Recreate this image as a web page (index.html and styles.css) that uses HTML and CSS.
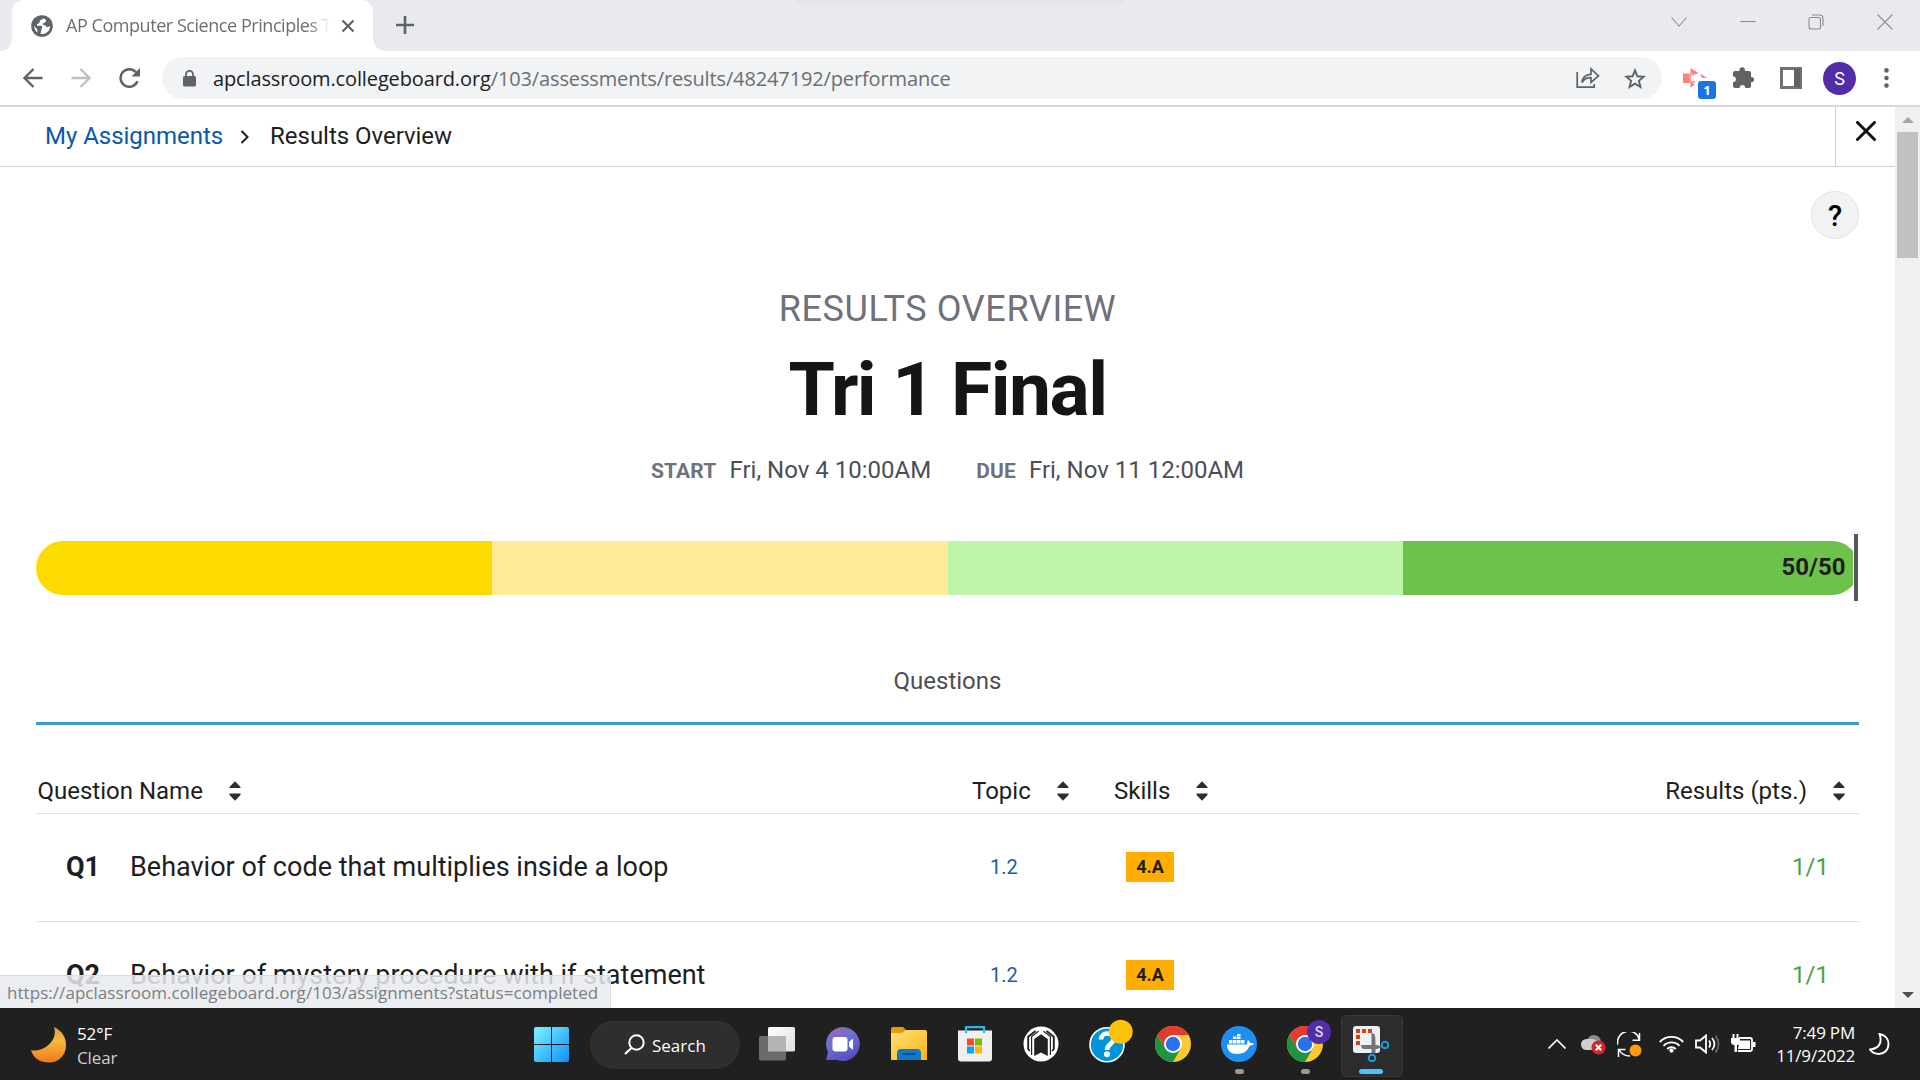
FILE: index.html
```html
<!DOCTYPE html>
<html lang="en">
<head>
<meta charset="utf-8">
<title>AP Computer Science Principles</title>
<link rel="stylesheet" href="styles.css">
</head>
<body>
<svg class="defs" width="0" height="0">
  <defs>
    <symbol id="sort" viewBox="0 0 12 20"><path d="M6 .3 11.500 6v1H.5V6zM6 19.700.5 14v-1.500h11V14z" fill="#2d2e30"/></symbol>
    <symbol id="chrome" viewBox="0 0 36 36">
      <circle cx="18" cy="18" r="18" fill="#fcc934"/>
      <path d="M2.400 9 10.200 22.500 18 18V9h15.600A18 18 0 0 0 2.400 9z" fill="#e33b2e"/>
      <path d="M2.400 9 10.200 22.500 18 27l7.800-4.500L18 36A18 18 0 0 1 2.400 9z" fill="#229342"/>
      <circle cx="18" cy="18" r="9" fill="#fff"/><circle cx="18" cy="18" r="7.200" fill="#2a72ec"/>
    </symbol>
  </defs>
</svg>
<div class="tabs">
  <div class="tab-prev"></div>
  <div class="tab">
    <svg class="globe" width="22" height="22" viewBox="0 0 22 22"><circle cx="11" cy="11" r="10.800" fill="#5f6368"/><path d="M12.500 3.200c-.6 1.300-2.600 1.100-3.600 2.400-.6.900.1 1.600-.6 2.400-.8.900-2.500.3-2.500 1.700 0 1.600 2.700 1 4.200 1.100 1.700.1 1.300 1.800.9 2.600-.7 1.300-.6 3.300-1.600 5.600 5.500.8 9.700-3 9.700-7.800-1.200-.2-1.600 1-2.900.7-1.300-.3-1.200-1.600-2.600-1.700-1.200 0-1.600-.6-1.500-1.500.2-1.400 2-.9 2.900-2 .8-1-.6-2.900-2.400-3.500zM3 10.500c.1 3 1 5.300 3.500 7.100-.1-2 .1-3.100-1.200-4.300C4.300 12.400 3.400 11.500 3 10.500z" fill="#fff"/></svg>
    <span class="tab-title seg">AP Computer Science Principles T</span>
    <svg width="14" height="14" viewBox="0 0 14 14"><path d="M1.500 1.500l11 11m0-11l-11 11" stroke="#5f6368" stroke-width="2.200"/></svg>
  </div>
  <svg class="plus" width="18" height="18" viewBox="0 0 18 18"><path d="M9 0v18M0 9h18" stroke="#5f6368" stroke-width="2.600"/></svg>
  <div class="top-shade"></div>
  <div class="win">
    <svg width="16" height="16" viewBox="0 0 16 16"><path d="M.5 3.500 8 12l7.500-8.500"/></svg>
    <svg width="16" height="16" viewBox="0 0 16 16"><path d="M.5 7.500h15"/></svg>
    <svg width="16" height="16" viewBox="0 0 16 16"><rect x="1" y="3.500" width="11.500" height="11.500" rx="2"/><path d="M4 1h8q3 0 3 3v8"/></svg>
    <svg width="16" height="16" viewBox="0 0 16 16"><path d="M.5.5l15 15m0-15l-15 15"/></svg>
  </div>
</div>
<div class="toolbar">
  <div class="nav">
    <svg width="20" height="20" viewBox="0 0 20 20"><path d="M19.500 10H2M10.500 1 1.500 10l9 9" fill="none" stroke="#5f6368" stroke-width="2.400"/></svg>
    <svg width="20" height="20" viewBox="0 0 20 20"><path d="M.5 10H18M9.500 1l9 9-9 9" fill="none" stroke="#bdbfc2" stroke-width="2.400"/></svg>
    <svg width="22" height="20" viewBox="0 0 22 20"><path d="M18.500 13.300A8.800 8.800 0 1 1 17 4.200" fill="none" stroke="#5f6368" stroke-width="2.500"/><path d="M21 0v8.500h-8.500z" fill="#5f6368"/></svg>
  </div>
  <div class="omni">
    <svg class="lock" width="13" height="17" viewBox="0 0 13 17"><rect y="6" width="13" height="10.500" rx="1.500" fill="#5f6368"/><path d="M3 7V4.300a3.500 3.500 0 0 1 7 0V7" fill="none" stroke="#5f6368" stroke-width="1.800"/></svg>
    <span class="url seg">apclassroom.collegeboard.org<span class="dim">/103/assessments/results/48247192/performance</span></span>
    <svg class="share" width="24" height="22" viewBox="0 0 24 22"><path d="M1.200 5v15.200h17V17M6 15.500c.5-5.500 3.500-8 9-8.200V2l7.500 7-7.500 6.500v-4.800c-4-.1-6.800 1-9 4.800z" fill="none" stroke="#5f6368" stroke-width="1.700"/></svg>
    <svg width="22" height="21" viewBox="0 0 22 21"><path d="M11 2.300l2.400 6 6.400.4-4.900 4.100 1.600 6.200L11 15.600l-5.500 3.400 1.600-6.200-4.900-4.100 6.400-.4z" fill="none" stroke="#5f6368" stroke-width="1.900"/></svg>
  </div>
  <div class="ext">
    <div class="ext-badged"><svg width="24" height="20" viewBox="0 0 24 20"><path d="M0 5.500h6V15H0zM7.500 0l8 5-3 1.500-5-.8zM7.500 14.500 12 16l-4.500 4zM17 5.500l7 4.500h-5z" fill="#ff8080"/><path d="M6 5.500h5v2H8v5.500h4v2H6z" fill="#ff9a9a"/></svg><b class="seg">1</b></div>
    <svg width="21" height="22" viewBox="0 0 21 22"><path d="M0 6q0-2 2-2h4.500V3a2.700 2.700 0 0 1 5.400 0v1H16q2 0 2 2v4h.5a2.600 2.600 0 0 1 0 5.200H18V19q0 2-2 2h-3.800c.1-2-1.100-3-2.700-3s-2.900 1-2.800 3H2q-2 0-2-2v-4c2 .1 3-1.100 3-2.700S2 9.500 0 9.600z" fill="#5f6368"/></svg>
    <svg width="22" height="22" viewBox="0 0 22 22"><path d="M0 0h22v22H0zM3 3v16h11V3z" fill="#6f7378" fill-rule="evenodd"/><path d="M14 2h6v18h-6z" fill="#5f6368"/></svg>
    <div class="avatar">S</div>
    <svg width="5" height="20" viewBox="0 0 5 20"><g fill="#5f6368"><circle cx="2.500" cy="2.400" r="2.300"/><circle cx="2.500" cy="10" r="2.300"/><circle cx="2.500" cy="17.600" r="2.300"/></g></svg>
  </div>
</div>
<div class="view">
  <main class="page">
    <header class="crumbs">
      <a>My Assignments</a>
      <svg width="9" height="14" viewBox="0 0 9 14"><path d="M1.500 1l6 6-6 6" fill="none" stroke="#1e1e1e" stroke-width="2"/></svg>
      <span>Results Overview</span>
      <div class="close"><svg width="20" height="20" viewBox="0 0 20 20"><path d="M1.500 1.500l17 17m0-17l-17 17" stroke="#111" stroke-width="3" stroke-linecap="round"/></svg></div>
    </header>
    <div class="help-row"><div class="help">?</div></div>
    <div class="content">
      <div class="kicker">RESULTS OVERVIEW</div>
      <h1>Tri 1 Final</h1>
      <div class="dates"><b>START</b><span>Fri, Nov 4 10:00AM</span><b class="due">DUE</b><span>Fri, Nov 11 12:00AM</span></div>
      <div class="score"><div class="bar"><i class="c1"></i><i class="c2"></i><i class="c3"></i><i class="c4"><b>50/50</b></i></div><div class="mark"></div></div>
      <div class="qtab">Questions</div>
      <div class="row head">
        <div class="name"><span>Question Name</span><svg width="12" height="20"><use href="#sort"/></svg></div>
        <div><span>Topic</span><svg width="12" height="20"><use href="#sort"/></svg></div>
        <div><span>Skills</span><svg width="12" height="20"><use href="#sort"/></svg></div>
        <div class="res"><span>Results (pts.)</span><svg width="12" height="20"><use href="#sort"/></svg></div>
      </div>
      <div class="row">
        <div class="name"><b>Q1</b><span>Behavior of code that multiplies inside a loop</span></div>
        <div class="topic">1.2</div><div class="skill"><b>4.A</b></div><div class="res">1/1</div>
      </div>
      <div class="row">
        <div class="name"><b>Q2</b><span>Behavior of mystery procedure with if statement</span></div>
        <div class="topic">1.2</div><div class="skill"><b>4.A</b></div><div class="res">1/1</div>
      </div>
    </div>
  </main>
  <div class="scroll">
    <svg width="12" height="6" viewBox="0 0 12 6"><path d="M0 6l6-6 6 6z" fill="#a3a3a3"/></svg>
    <div class="thumb"></div>
    <svg class="down" width="12" height="6" viewBox="0 0 12 6"><path d="M0 0h12L6 6z" fill="#505050"/></svg>
  </div>
  <div class="status seg">https://apclassroom.collegeboard.org/103/assignments?status=completed</div>
</div>
<footer class="taskbar seg">
  <div class="weather">
    <svg width="36" height="36" viewBox="0 0 36 36"><defs><linearGradient id="mg" x1="0" y1="0" x2="0" y2="1"><stop offset="0" stop-color="#e0a050"/><stop offset=".4" stop-color="#f6b93b"/><stop offset="1" stop-color="#ee7a1c"/></linearGradient></defs><path d="M23 0C31 4 35 10 35 18.500 35 28 28 35.500 18 35.500 9 35.500 2 31 0 23c3 1 7 .7 12-1.500C21 17 26 9 23 0z" fill="url(#mg)"/></svg>
    <div>52°F<br><em>Clear</em></div>
  </div>
  <div class="apps">
    <div class="app start"><svg width="36" height="36" viewBox="0 0 36 36"><defs><linearGradient id="wg" gradientUnits="userSpaceOnUse" x1="0" y1="0" x2="36" y2="36"><stop offset="0" stop-color="#7df4ff"/><stop offset="1" stop-color="#0b8dfb"/></linearGradient></defs><path d="M2 0h15v17H0V2q0-2 2-2zM18 0h15q2 0 2 2v15H18zM0 18h17v17H2q-2 0-2-2zM18 18h17v15q0 2-2 2H18z" fill="url(#wg)"/></svg></div>
    <div class="search"><svg width="21" height="21" viewBox="0 0 21 21"><circle cx="12.500" cy="8.500" r="7.200" fill="none" stroke="#fff" stroke-width="2"/><path d="M7.500 14 1 20" stroke="#fff" stroke-width="2.200"/></svg><span>Search</span></div>
    <div class="app"><svg width="36" height="36" viewBox="0 0 36 36"><defs><linearGradient id="tg" x1="0" y1="0" x2="1" y2="1"><stop offset="0" stop-color="#fff"/><stop offset="1" stop-color="#dedede"/></linearGradient></defs><rect x="9" y="1" width="27" height="24.500" rx="1.500" fill="url(#tg)"/><rect y="10" width="27" height="24.500" rx="1.500" fill="#6a6a6a"/><path d="M9 10h16.500q1.500 0 1.500 1.500v14H9z" fill="#b4b4b4"/></svg></div>
    <div class="app"><svg width="36" height="36" viewBox="0 0 36 36"><defs><linearGradient id="cg" x1="0" y1="0" x2=".5" y2="1"><stop offset="0" stop-color="#a266a8"/><stop offset=".5" stop-color="#6d6fd6"/><stop offset="1" stop-color="#5550c4"/></linearGradient></defs><path d="M18 1a17 17 0 1 1-6 33H1l2-8A17 17 0 0 1 18 1z" fill="url(#cg)"/><rect x="7.500" y="11" width="15" height="14.500" rx="3" fill="#fff"/><path d="M24 16l4-3.500v11.500l-4-3.500z" fill="#fff"/></svg></div>
    <div class="app"><svg width="36" height="36" viewBox="0 0 36 36"><defs><linearGradient id="fg" x1="0" y1="0" x2="1" y2="1"><stop offset="0" stop-color="#ffe07c"/><stop offset="1" stop-color="#fbb50f"/></linearGradient></defs><path d="M0 8V3q0-2 2-2h10l4 4v5H0z" fill="#e29c07"/><path d="M0 7h11l4-3h19q2 0 2 2v28H0z" fill="url(#fg)"/><path d="M6 34v-7q0-4 4-4h16q4 0 4 4v7z" fill="#1079cc"/><path d="M11 28h14" stroke="#0a4f97" stroke-width="2"/></svg></div>
    <div class="app"><svg width="36" height="36" viewBox="0 0 36 36"><path d="M9 6V1.200h18V6" fill="none" stroke="#28b4f0" stroke-width="2.200"/><path d="M1 4.500h34v28q0 3-3 3H4q-3 0-3-3z" fill="#f0f0f0"/><path d="M10 12.500h7v7h-7z" fill="#f04e23"/><path d="M18 12.500h7v7h-7z" fill="#7fb900"/><path d="M10 20.500h7v7h-7z" fill="#03a4ee"/><path d="M18 20.500h7v7h-7z" fill="#fdb902"/><path d="M9 4.500v2.500M27 4.500v2.500" stroke="#28b4f0" stroke-width="2.200"/></svg></div>
    <div class="app"><svg width="36" height="36" viewBox="0 0 36 36"><circle cx="18" cy="18" r="17.500" fill="#fff"/><path d="M11.200 13 18 8.300l6.800 4.700v17L18 26.500 11.200 30z" fill="#222"/><path d="M15.500 5.300 8.600 10.500V29M20.500 5.300l6.900 5.200V29" fill="none" stroke="#222" stroke-width="1.200"/><path d="M12.500 5 5.200 10.800V23l1.600 2M23.500 5l7.300 5.800V23l-1.600 2" fill="none" stroke="#222" stroke-width="1.900"/></svg></div>
    <div class="app"><svg class="spill" width="44" height="44" viewBox="0 0 44 44"><circle cx="22" cy="22.700" r="17" fill="#0096d8" stroke="#fff" stroke-width="1.600"/><path d="M16 17.500c0-8 12.500-8 12.500-.5 0 5-6.500 5-6.500 11" fill="none" stroke="#fff" stroke-width="4.600"/><circle cx="22" cy="32.200" r="3" fill="#fff"/><circle cx="35.700" cy="9.700" r="12" fill="#ffc20a"/></svg></div>
    <div class="app"><svg width="36" height="36"><use href="#chrome"/></svg></div>
    <div class="app run"><svg width="36" height="36" viewBox="0 0 36 36"><circle cx="18" cy="18" r="18" fill="#1d8ff0"/><path d="M6 18.500h20c.5-2 .2-3 1-4.500 1.300 1 1.800 2 2 3 1.500-.2 3 0 4 .6-.8 1.700-2.500 2.200-4.500 2.200C26 26 22 28 16 28 10 28 6 25 6 18.500zM8 14h3.500v3.500H8zM12 14h3.500v3.500H12zM16 14h3.500v3.500H16zM20 14h3.500v3.500H20zM12 10.500h3.500V13H12zM16 10.500h3.500V13H16zM16 8h3.500v2H16z" fill="#fff"/></svg></div>
    <div class="app run"><svg width="36" height="36"><use href="#chrome"/></svg><b class="pbadge">S</b></div>
    <div class="app active"><svg width="36" height="36" viewBox="0 0 36 36"><rect width="27" height="27" rx="3" fill="#eef0f3"/><path d="M3 3h4v4H3zM9 3h4v4H9zM15 3h4v4h-4zM3 9h4v4H3zM3 15h4v4H3z" fill="#d8400f"/><path d="M18.500 7c4 0 4 3 4 13v7h-4zM8 19h16l5 2-5 2H11c-2 0-3-2-3-4z" fill="#70757a"/><circle cx="32" cy="19" r="3.300" fill="none" stroke="#1c9be6" stroke-width="2"/><circle cx="19" cy="32" r="3.300" fill="none" stroke="#1c9be6" stroke-width="2"/></svg></div>
  </div>
  <div class="tray">
    <svg width="18" height="10" viewBox="0 0 18 10"><path d="M.5 9.500 9 1l8.500 8.500" fill="none" stroke="#fff" stroke-width="1.600"/></svg>
    <svg width="25" height="21" viewBox="0 0 25 21"><circle cx="13" cy="8" r="7" fill="#8c8c8c"/><rect x="0" y="5" width="17" height="11" rx="5.500" fill="#cfcfcf"/><circle cx="17.500" cy="13.500" r="7" fill="#d8232a"/><path d="M14.800 10.800l5.400 5.400m0-5.400l-5.400 5.400" stroke="#fff" stroke-width="2"/></svg>
    <svg class="sync" width="25" height="25" viewBox="0 0 25 25"><path d="M.8 12.500A11 11 0 0 1 22.500 8M15.500 8.300h7V1M13 24C8 24 4 21.500 1.800 17.500M8.500 17.500h-7V25" fill="none" stroke="#fff" stroke-width="1.500"/><circle cx="18.500" cy="18.500" r="6" fill="#ff9b0a"/></svg>
    <svg width="25" height="18" viewBox="0 0 25 18"><g fill="none" stroke="#fff" stroke-width="1.900"><path d="M.8 7a16 16 0 0 1 23.400 0M4.500 10.800a11 11 0 0 1 16 0M8.200 14a6.300 6.300 0 0 1 8.600 0"/></g><circle cx="12.500" cy="15.600" r="2.100" fill="#fff"/></svg>
    <svg width="25" height="20" viewBox="0 0 25 20"><g fill="none" stroke="#fff" stroke-width="1.800"><path d="M1 6.500h4L11 1.500v17L5 13.500H1zM14 6.500q2.500 3.500 0 7M17 4q5 6 0 12"/><path d="M20.500 1.500q6 8.500 0 17" stroke="#666"/></g></svg>
    <svg width="25" height="20" viewBox="0 0 25 20"><path d="M8 4h11q2 0 2 2v9q0 2-2 2H7" fill="none" stroke="#fff" stroke-width="1.800"/><path d="M8.500 6.500h10.500v8.500H7zM22 8h2.500v5H22zM0 4h9v4q0 3-3 3v7H3.500v-7Q0 11 0 8zM1.500 0h2v4h-2zM5.500 0h2v4h-2z" fill="#fff"/></svg>
    <div class="clock">7:49 PM<br><span>11/9/2022</span></div>
    <svg class="dnd" width="21" height="22" viewBox="0 0 21 22"><path d="M10.500 1C16 2 19.500 6 19.500 11 19.500 17 15 21 10 21c-4 0-7-1.500-9-4.500C9 15.500 14 11 10.500 1z" fill="none" stroke="#fff" stroke-width="1.900"/></svg>
  </div>
</footer>
</body>
</html>
```
FILE: styles.css
```css
* { box-sizing: border-box; }
body { margin: 0; width: 1920px; height: 1080px; overflow: hidden; background: #fff; font-family: Roboto, "Liberation Sans", sans-serif; color: #1e1e1e; display: flex; flex-direction: column; white-space: nowrap; }
svg { display: block; flex: none; }
.defs { position: absolute; }
.spill { overflow: visible; }
.seg { font-family: "Open Sans", "Noto Sans", sans-serif; }

/* tab strip */
.tabs { height: 51px; flex: none; background: #e8eaed; display: flex; position: relative; }
.tab-prev { width: 12px; background: #fff; }
.tab-prev::before { content: ""; display: block; height: 51px; background: #e8eaed; border-bottom-right-radius: 12px; }
.tab { width: 361px; background: #fff; border-radius: 12px 12px 0 0; display: flex; align-items: center; padding-left: 19px; position: relative; }
.tab::after { content: ""; position: absolute; left: 361px; bottom: 0; width: 12px; height: 12px; background: radial-gradient(circle at 100% 0, #e8eaed 11.500px, #fff 12px); }
.tab-title { width: 264px; margin: 0 11px 0 13px; font-size: 18px; line-height: 48px; height: 50px; letter-spacing: -.45px; color: #6b6f73; overflow: hidden; -webkit-mask-image: linear-gradient(90deg, #000 92%, transparent 100%); mask-image: linear-gradient(90deg, #000 92%, transparent 100%); }
.plus { margin: 16px 0 0 23px; }
.top-shade { width: 330px; height: 5px; margin-left: 381px; background: linear-gradient(#e2e3e6, #e8eaed); }
.win { margin-left: auto; padding: 14px 27px 0 0; display: flex; gap: 52.600px; }
.win svg { fill: none; stroke: #8b8d91; stroke-width: 1.100; }

/* toolbar */
.toolbar { height: 56px; flex: none; border-bottom: 2px solid #d9dadc; display: flex; align-items: center; }
.nav { width: 162px; padding-left: 23px; display: flex; align-items: center; gap: 28px; }
.omni { width: 1500px; height: 42px; border-radius: 21px; background: #f1f3f4; display: flex; align-items: center; padding: 0 16px 0 21px; }
.url { margin: 2px 0 0 17px; font-size: 20px; line-height: 40px; letter-spacing: -.13px; color: #202124; }
.dim { color: #6b6f73; }
.share { margin: 0 24px 0 auto; }
.ext { display: flex; align-items: center; margin-left: 21px; flex: 1; }
.ext-badged { position: relative; margin-right: 26px; }
.ext-badged b { position: absolute; left: 15px; top: 13px; width: 18px; height: 18px; border-radius: 3px; background: #1a73e8; color: #fff; font-size: 13px; line-height: 19px; text-align: center; }
.ext svg + svg { margin-left: 26px; }
.avatar { width: 33px; height: 33px; border-radius: 50%; background: #512da8; color: #fff; font-size: 18px; line-height: 33px; text-align: center; margin: 0 28px 0 21px; }

/* page */
.view { height: 901px; flex: none; display: flex; position: relative; overflow: hidden; }
.page { width: 1895px; }
.crumbs { height: 60px; border-bottom: 1px solid #d0d0d0; display: flex; align-items: center; padding-left: 45px; font-size: 24px; line-height: 28px; letter-spacing: -.03px; }
.crumbs a { color: #0b57a8; }
.crumbs a, .crumbs span { padding-bottom: 2px; }
.crumbs svg { margin: 0 21px 0 17px; }
.close { margin-left: auto; width: 60px; height: 59px; border-left: 1px solid #d0d0d0; padding: 14px 0 0 20px; }
.crumbs .close svg { margin: 0; }
.help-row { height: 72px; padding: 24px 36px 0 0; display: flex; justify-content: flex-end; }
.help { width: 48px; height: 48px; border-radius: 50%; border: 1px solid #e3e3e3; background: #f2f2f2; color: #000; font-size: 29px; font-weight: 500; line-height: 48px; text-align: center; }
.content { margin: 0 36px; }
.kicker { margin-top: 44px; height: 50px; line-height: 52px; font-size: 36px; letter-spacing: .6px; color: #6f717b; text-align: center; }
h1 { margin: 15px 0 0; height: 80px; line-height: 82px; font-size: 75px; font-weight: 700; letter-spacing: -1.500px; color: #151515; text-align: center; }
.dates { margin-top: 27px; height: 30px; display: flex; justify-content: center; align-items: center; font-size: 24px; color: #4c4e57; }
.dates b { font-size: 21px; color: #6f717b; margin: 2px 13px 0 0; letter-spacing: .15px; }
.dates .due { margin-left: 45px; }
.score { display: flex; margin-top: 49px; height: 67px; align-items: center; }
.bar { flex: 1; height: 54px; display: flex; border-radius: 27px 0 0 27px; overflow: hidden; margin-right: 1px; }
.bar i { flex: none; width: 455.750px; }
.c1 { background: #fedb00; } .c2 { background: #ffeb9a; } .c3 { background: #bdf4a9; }
.bar .c4 { background: #6cc24a; border-radius: 0 27px 27px 0; font-style: normal; font-size: 24px; line-height: 52px; text-align: right; padding-right: 13.500px; }
.mark { width: 4px; height: 67px; background: #53565a; margin-right: 1px; }
.qtab { margin-top: 43px; height: 81px; border-bottom: 3px solid #3c99d4; line-height: 75px; font-size: 24px; color: #4c4e57; text-align: center; }
.row { height: 108px; border-bottom: 1px solid #e0e1e2; display: grid; grid-template-columns: 936px 142px 1fr auto; align-items: center; font-size: 24px; padding-bottom: 2px; }
.row > div { display: flex; align-items: center; }
.head { height: 89px; padding: 43px 0 0; }
.head .name { padding-left: 1.500px; }
.head svg { margin-left: 26px; }
.head .res { padding-right: 14px; }
.row .name { font-size: 27px; }
.head .name { font-size: 24px; }
.name b { width: 64px; margin-left: 30px; }
.topic { font-size: 20px; color: #1a5cab; padding-left: 18px; }
.skill b { margin-left: 12px; width: 48px; height: 30px; background: #ffad00; font-size: 18px; line-height: 30px; text-align: center; }
.row .res { justify-content: flex-end; }
.row:not(.head) .res { color: #4ba23f; padding-right: 30px; }
.scroll { width: 25px; background: #f0f0f0; display: flex; flex-direction: column; align-items: center; padding: 10px 0; }
.thumb { width: 21px; height: 126px; margin-top: 9px; background: #c1c1c1; }
.down { margin-top: auto; }
.status { position: absolute; left: 0; bottom: 0; width: 611px; height: 33px; background: rgba(232, 234, 237, .85); border-top: 1px solid #dcdddf; border-right: 1px solid #dcdddf; padding-left: 7px; font-size: 17px; line-height: 34px; letter-spacing: .05px; color: #7b7e82; }

/* taskbar */
.taskbar { height: 72px; flex: none; background: #202020; display: grid; grid-template-columns: 518px 886px 1fr; color: #fff; }
.weather { display: flex; align-items: center; padding: 3px 0 0 31px; gap: 10px; font-size: 17px; line-height: 24px; letter-spacing: -.1px; }
.weather svg { margin-bottom: 2px; }
.weather em { font-style: normal; color: #cfcfcf; }
.apps { display: flex; align-items: center; }
.app { width: 66px; height: 72px; display: flex; align-items: center; justify-content: center; position: relative; }
.start { padding: 2px 0 0 1px; }
.search { width: 150px; height: 48px; margin: 2px 4px 0 6px; border-radius: 24px; background: #2e2e2e; border-top: 1px solid #3a3a3a; display: flex; align-items: center; padding: 0 0 0 34px; gap: 7px; font-size: 17px; }
.search svg { margin-bottom: 2px; }
.run::after, .active::after { content: ""; position: absolute; bottom: 6px; width: 9px; height: 5px; border-radius: 3px; background: #9a9a9a; }
.active::before { content: ""; position: absolute; left: 3px; top: 7px; width: 60px; height: 60px; border-radius: 6px; border: 1px solid #393939; background: #2c2c2c; }
.active svg { position: relative; }
.active::after { width: 24px; background: #4cc2ff; }
.pbadge { position: absolute; left: 35px; top: 12px; width: 24px; height: 24px; border-radius: 50%; background: #512da8; color: #ddd; font: 500 14px/24px Roboto, sans-serif; text-align: center; }
.tray { display: flex; align-items: center; padding-left: 144px; font-size: 17px; line-height: 23px; letter-spacing: -.2px; }
.tray svg { margin-right: 11px; }
.tray svg:first-child { margin-right: 15px; }
.tray .sync { margin-right: 17px; }
.clock { margin-left: auto; text-align: right; }
.tray .dnd { margin: 0 30px 0 14px; }
```
